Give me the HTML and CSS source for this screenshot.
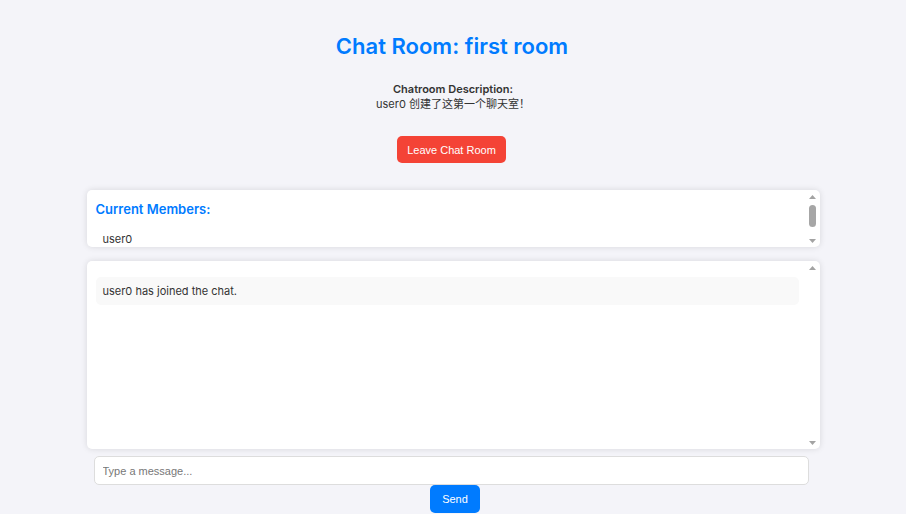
FILE: index.html
```html
<!DOCTYPE html>
<html lang="en">
<head>
<meta charset="utf-8">
<title>Chat Room</title>
<link rel="stylesheet" href="styles.css">
</head>
<body>
<div class="page">
  <h1 class="title">Chat Room: first room</h1>
  <div class="desc">
    <div class="desc-label">Chatroom Description:</div>
    <div class="desc-text">user0 创建了这第一个聊天室！</div>
  </div>
  <button class="btn btn-leave">Leave Chat Room</button>
  <div class="box members">
    <div class="members-body">
      <h3 class="members-title">Current Members:</h3>
      <ul class="member-list">
        <li class="member">user0</li>
      </ul>
    </div>
    <div class="vscroll">
      <div class="sb-btn"><svg width="7" height="4" viewBox="0 0 7 4"><path d="M0 4L3.5 0L7 4Z" fill="#a3a3a3"/></svg></div>
      <div class="sb-track"><div class="sb-thumb"></div></div>
      <div class="sb-btn"><svg width="7" height="4" viewBox="0 0 7 4"><path d="M0 0L3.5 4L7 0Z" fill="#a3a3a3"/></svg></div>
    </div>
  </div>
  <div class="box chat">
    <div class="chat-body">
      <div class="message">user0 has joined the chat.</div>
    </div>
    <div class="vscroll">
      <div class="sb-btn"><svg width="7" height="4" viewBox="0 0 7 4"><path d="M0 4L3.5 0L7 4Z" fill="#a3a3a3"/></svg></div>
      <div class="sb-track"></div>
      <div class="sb-btn"><svg width="7" height="4" viewBox="0 0 7 4"><path d="M0 0L3.5 4L7 0Z" fill="#a3a3a3"/></svg></div>
    </div>
  </div>
  <div class="composer">
    <input class="input" type="text" placeholder="Type a message...">
    <button class="btn btn-send">Send</button>
  </div>
</div>
</body>
</html>
```
FILE: styles.css
```css
html, body {
  margin: 0;
  padding: 0;
  background: #f4f4f9;
  overflow: hidden;
}
body {
  font-family: Inter, "Noto Sans CJK SC", sans-serif;
  color: #333;
}
.page {
  width: 733px;
  margin: 0 auto;
  padding-top: 31px;
  display: flex;
  flex-direction: column;
  align-items: center;
}
.title {
  margin: 0 0 0 -2px;
  font-size: 22px;
  line-height: 30px;
  font-weight: 600;
  color: #007bff;
}
.desc {
  margin-top: 21px;
  text-align: center;
  font-size: 11px;
  line-height: 15px;
  color: #333;
}
.desc-label {
  font-weight: 600;
}
.btn {
  font-family: "Liberation Sans", Arial, sans-serif;
  font-size: 11px;
  color: #fff;
  border: none;
  border-radius: 5px;
  cursor: pointer;
}
.btn-leave {
  margin-top: 24px;
  margin-right: 3px;
  width: 109px;
  height: 27px;
  background: #f44336;
}
.box {
  align-self: stretch;
  box-sizing: border-box;
  display: flex;
  background: #fff;
  border-radius: 5px;
  box-shadow: 0 0 6px rgba(0,0,0,0.12);
  overflow: hidden;
}
.members {
  margin-top: 27px;
  height: 57px;
}
.members-body {
  flex: 1;
  padding: 9px 0 0 9px;
}
.members-title {
  margin: 0;
  font-size: 13px;
  line-height: 20px;
  font-weight: 600;
  color: #007bff;
}
.member-list {
  list-style: none;
  margin: 12px 0 0;
  padding: 0;
}
.member {
  font-size: 11px;
  line-height: 17px;
  padding: 0 7px;
}
.chat {
  margin-top: 14px;
  height: 188px;
}
.chat-body {
  flex: 1;
  padding: 16px 6px 10px 9px;
}
.message {
  background: #f9f9f9;
  border-radius: 5px;
  padding: 6px 7px;
  font-size: 11px;
  line-height: 16px;
  color: #333;
}
.vscroll {
  width: 15px;
  flex: none;
  display: flex;
  flex-direction: column;
}
.sb-btn {
  height: 13px;
  display: flex;
  align-items: center;
  justify-content: center;
}
.sb-btn svg {
  display: block;
}
.sb-track {
  flex: 1;
  display: flex;
  justify-content: center;
}
.sb-thumb {
  margin-top: 2px;
  width: 7px;
  height: 22px;
  border-radius: 4px;
  background: #a6a6a6;
}
.composer {
  margin-top: 7px;
  align-self: stretch;
  display: flex;
  flex-direction: column;
  align-items: center;
}
.input {
  box-sizing: border-box;
  width: 715px;
  margin-right: 4px;
  height: 29px;
  border: 1px solid #ddd;
  border-radius: 5px;
  padding: 0 8px;
  font-family: "Liberation Sans", Arial, sans-serif;
  font-size: 11px;
  outline: none;
  background: #fff;
}
.input::placeholder {
  color: #777;
}
.btn-send {
  width: 50px;
  height: 28px;
  background: #007bff;
  margin-left: 4px;
}
```
